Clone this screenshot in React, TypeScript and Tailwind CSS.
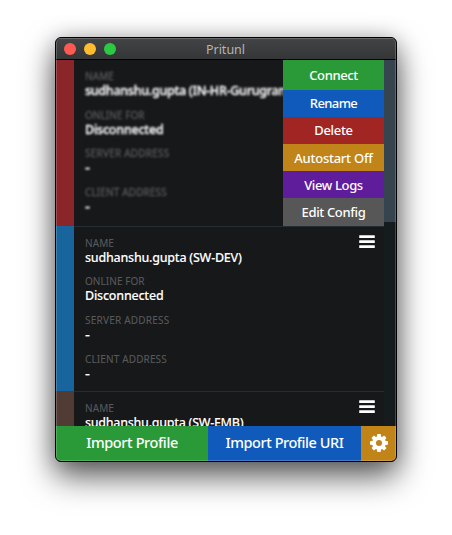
import React from "react";

function Bars() {
  return (
    <svg viewBox="0 0 16 14" className="absolute top-[9px] right-[9px] h-[14px] w-4" fill="#fff">
      <rect x="0.2" y="0.2" width="15.6" height="2.7" rx="0.5" />
      <rect x="0.2" y="5.2" width="15.6" height="2.7" rx="0.5" />
      <rect x="0.2" y="10.2" width="15.6" height="2.7" rx="0.5" />
    </svg>
  );
}

function Gear() {
  return (
    <svg viewBox="0 128 1536 1536" className="size-[18px]" fill="currentColor">
      <path fillRule="evenodd" d="M1024 896a256 256 0 1 0-512 0a256 256 0 1 0 512 0zM1536 787v222q0 12-8 23t-20 13l-185 28q-19 54-39 91 35 50 107 138 10 12 10 25t-9 23q-27 37-99 108t-94 71q-12 0-26-9l-138-108q-44 23-91 38-16 136-29 186-7 28-36 28h-222q-14 0-24.500-8.500t-11.500-21.500l-28-184q-49-16-90-37l-141 107q-10 9-25 9-14 0-25-11-126-114-165-168-7-10-7-23 0-12 8-23 15-21 51-66.500t54-70.500q-27-50-41-99l-183-27q-13-2-21-12.500t-8-23.500v-222q0-12 8-23t19-13l186-28q14-46 39-92-40-57-107-138-10-12-10-24 0-10 9-23 26-36 98.500-107.500t94.500-71.500q13 0 26 10l138 107q44-23 91-38 16-136 29-186 7-28 36-28h222q14 0 24.500 8.500t11.500 21.500l28 184q49 16 90 37l142-107q9-9 24-9 13 0 25 10 129 119 165 170 7 8 7 22 0 12-8 23-15 21-51 66.500t-54 70.500q26 50 41 98l183 28q13 2 21 12.500t8 23.500z" transform="translate(0 0)" />
    </svg>
  );
}

type FieldProps = { label: string; value: string; labelClass: string; valueClass: string; gap: string };

function Field({ label, value, labelClass, valueClass, gap }: FieldProps) {
  return (
    <div className={`flex flex-col whitespace-nowrap ${gap}`}>
      <span className={`h-[13px] text-[10px] leading-[13px] text-[#58595b] ${labelClass}`}>{label}</span>
      <span className={`h-4 text-[12.5px] leading-4 font-medium text-white ${valueClass}`}>{value}</span>
    </div>
  );
}

function Profile({ name, color, nameClass, first = false }: { name: string; color: string; nameClass: string; first?: boolean }) {
  return (
    <section className={`relative flex shrink-0 ${first ? "h-[166px]" : "h-[165px]"}`}>
      <div className={`w-[18px] shrink-0 ${color}`} />
      <div className={`min-w-0 flex-1 pt-[10px] pl-[11px] ${first ? "" : "border-t border-[#232d36]"}`}>
        <div className={first ? "[filter:blur(0.8px)] [-webkit-text-stroke:0.3px]" : "[-webkit-text-stroke:0.1px]"}>
          <Field label="NAME" value={name} labelClass="tracking-[0.1px]" valueClass={nameClass} gap="mb-[10px]" />
          <Field label="ONLINE FOR" value="Disconnected" labelClass="tracking-[0.05px]" valueClass="tracking-[-0.22px]" gap={first ? "mb-[9px]" : "-mt-px mb-[10px]"} />
          <Field label="SERVER ADDRESS" value="-" labelClass="tracking-[0.22px]" valueClass="scale-x-125 origin-left" gap="mb-[10px]" />
          <Field label="CLIENT ADDRESS" value="-" labelClass="tracking-[0.13px]" valueClass="scale-x-125 origin-left" gap="" />
        </div>
      </div>
      {!first && <Bars />}
    </section>
  );
}

const actions = [
  { label: "Connect", style: "h-[30px] bg-[#2a9a38] pt-px tracking-[-0.4px]" },
  { label: "Rename", style: "h-[27px] bg-[#0f5abb] tracking-[-0.6px]" },
  { label: "Delete", style: "h-[27px] bg-[#a12522] tracking-[-0.3px]" },
  { label: "Autostart Off", style: "h-[27px] bg-[#c08419] pt-0.5 tracking-[-0.25px]" },
  { label: "View Logs", style: "h-[27px] bg-[#5f1d9c] pt-0.5 tracking-[-0.35px]" },
  { label: "Edit Config", style: "h-[28px] bg-[#575757] pt-px tracking-[-0.35px]" },
];

export default function App() {
  return (
    <div className="h-[535px] w-[452px] overflow-hidden bg-white pt-[37px] pl-[55px] font-['Noto_Sans','Open_Sans',sans-serif]">
      <main className="relative flex h-[425px] w-[342px] flex-col overflow-hidden rounded-[6px] border border-black bg-[#17181a] shadow-[0_15px_32px_rgba(0,0,0,0.6),0_2px_22px_rgba(0,0,0,0.25)]">
        <header className="relative flex h-[22px] shrink-0 items-center justify-center border-t border-b border-t-[#68696a] border-b-black bg-linear-to-b from-[#414344] to-[#343637]">
          <div className="absolute left-2 flex gap-2">
            <i className="size-3 rounded-full bg-[#ff5a52]" />
            <i className="size-3 rounded-full bg-[#fdbd2f]" />
            <i className="size-3 rounded-full bg-[#2acb42]" />
          </div>
          <h1 className="pt-px pr-px text-[12.5px] leading-5 text-[#b4b5b6]">Pritunl</h1>
        </header>
        <div className="flex h-[366px] shrink-0 overflow-hidden">
          <div className="relative w-[328px] shrink-0">
            <Profile first name="sudhanshu.gupta (IN-HR-Gurugram)" color="bg-[#8a2629]" nameClass="tracking-[-0.27px]" />
            <Profile name="sudhanshu.gupta (SW-DEV)" color="bg-[#18659d]" nameClass="tracking-[-0.24px]" />
            <Profile name="sudhanshu.gupta (SW-EMB)" color="bg-[#513b35]" nameClass="tracking-[-0.29px]" />
            <nav className="absolute top-0 right-0 w-[101px] text-[13px] font-medium text-white">
              {actions.map((a) => (
                <button key={a.label} className={`flex w-full items-center justify-center whitespace-nowrap ${a.style}`}>
                  {a.label}
                </button>
              ))}
            </nav>
          </div>
          <div className="w-3 bg-[#161b1e]">
            <div className="h-[162px] bg-[#364450]" />
          </div>
        </div>
        <footer className="flex h-[35px] shrink-0 text-[14.5px] font-medium text-white">
          <button className="w-[152px] bg-[#2a9a38] pb-px tracking-[-0.38px]">Import Profile</button>
          <button className="w-[153px] bg-[#0f5abb] pb-px tracking-[-0.44px]">Import Profile URI</button>
          <button className="flex w-[35px] items-center justify-center bg-[#c08419] pb-0.5">
            <Gear />
          </button>
        </footer>
        <div className="pointer-events-none absolute inset-0 rounded-[5px] border border-t-0 border-white/20" />
      </main>
    </div>
  );
}
